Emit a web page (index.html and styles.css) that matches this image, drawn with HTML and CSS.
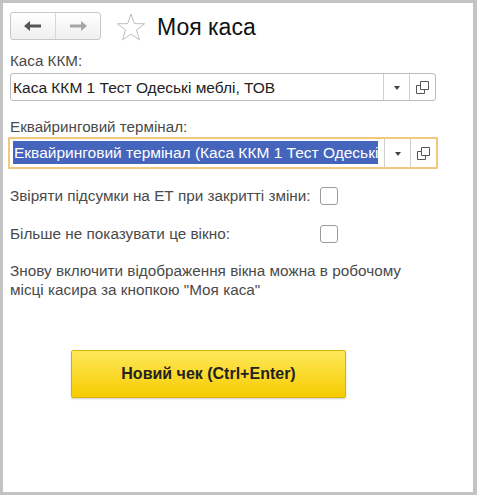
FILE: index.html
```html
<!DOCTYPE html>
<html lang="uk">
<head>
    <meta charset="UTF-8">
    <meta name="viewport" content="width=device-width, initial-scale=1.0">
    <title>Моя каса</title>
    <link rel="stylesheet" href="styles.css">
</head>
<body>

<div class="window">
    <div class="header">
        <div class="nav">
            <button class="nav-btn" title="Назад">
                <svg width="18" height="10" viewBox="0 0 18 10"><path d="M0 5 L6 0 V3.5 H17 V6.5 H6 V10 Z" fill="#555"/></svg>
            </button>
            <button class="nav-btn" title="Вперед">
                <svg width="18" height="10" viewBox="0 0 18 10"><path d="M18 5 L12 0 V3.5 H1 V6.5 H12 V10 Z" fill="#a6a6a6"/></svg>
            </button>
        </div>
        <svg class="star" width="30" height="28" viewBox="0 0 30 28">
            <path d="M15 1 L18.4 10.6 L28.6 10.8 L20.5 17 L23.4 26.8 L15 21 L6.6 26.8 L9.5 17 L1.4 10.8 L11.6 10.6 Z" fill="none" stroke="#bdbdbd" stroke-width="1"/>
        </svg>
        <h1 class="title">Моя каса</h1>
    </div>

    <div class="form">
        <div class="field-label">Каса ККМ:</div>
        <div class="combo">
            <div class="combo-text">Каса ККМ 1 Тест Одеські меблі, ТОВ</div>
            <div class="combo-btn"><span class="drop-arrow"></span></div>
            <div class="combo-btn">
                <svg width="13" height="13" viewBox="0 0 13 13"><path d="M4.5 0.5 H12.5 V8.5 H4.5 Z M4.5 4.5 H0.5 V12.5 H8.5 V8.5" fill="none" stroke="#555" stroke-width="1"/></svg>
            </div>
        </div>

        <div class="field-label second">Еквайринговий термінал:</div>
        <div class="combo focused">
            <div class="combo-text"><span class="selected">Еквайринговий термінал (Каса ККМ 1 Тест Одеські</span></div>
            <div class="combo-btn"><span class="drop-arrow"></span></div>
            <div class="combo-btn">
                <svg width="13" height="13" viewBox="0 0 13 13"><path d="M4.5 0.5 H12.5 V8.5 H4.5 Z M4.5 4.5 H0.5 V12.5 H8.5 V8.5" fill="none" stroke="#555" stroke-width="1"/></svg>
            </div>
        </div>

        <div class="check-row">
            <span class="check-label">Звіряти підсумки на ЕТ при закритті зміни:</span>
            <span class="checkbox"></span>
        </div>
        <div class="check-row">
            <span class="check-label">Більше не показувати це вікно:</span>
            <span class="checkbox"></span>
        </div>

        <p class="hint">Знову включити відображення вікна можна в робочому місці касира за кнопкою "Моя каса"</p>

        <div class="actions">
            <button class="main-btn">Новий чек (Ctrl+Enter)</button>
        </div>
    </div>
</div>

</body>
</html>
```

FILE: styles.css
```css
body {
    margin: 0;
    background-color: #c3c3c3;
    font-family: Arial, "Liberation Sans", sans-serif;
}
.window {
    margin: 3px 4px 0 3px;
    height: 489px;
    background: white;
    padding: 9px 0 0 7px;
    box-sizing: border-box;
}
.header {
    display: flex;
    align-items: center;
    height: 28px;
}
.nav {
    display: flex;
    width: 91px;
    height: 28px;
    border: 1px solid #c8c8c8;
    border-radius: 3px;
    box-sizing: border-box;
    background: linear-gradient(#ffffff, #efefef);
}
.nav-btn {
    flex: 1;
    border: none;
    background: none;
    padding: 0;
    display: flex;
    align-items: center;
    justify-content: center;
}
.nav-btn + .nav-btn {
    border-left: 1px solid #d6d6d6;
}
.star {
    margin-left: 15px;
    margin-top: 2px;
}
.title {
    margin: 2px 0 0 11px;
    font-size: 23px;
    font-weight: normal;
    color: #111;
}
.form {
    padding-top: 12px;
    width: 426px;
}
.field-label {
    font-size: 15.2px;
    color: #4a4a4a;
    height: 21px;
}
.field-label.second {
    margin-top: 17px;
}
.combo {
    display: flex;
    height: 28px;
    border: 1px solid #bcbcbc;
    border-radius: 3px;
    box-sizing: border-box;
    align-items: stretch;
}
.combo.focused {
    margin: -2px 0 0 -2px;
    border: 2px solid #f1c97e;
    width: 430px;
    height: 32px;
    border-radius: 1px;
    padding: 2px 0 2px 3px;
}
.combo-text {
    flex: 1;
    overflow: hidden;
    white-space: nowrap;
    font-size: 15.5px;
    color: #222;
    padding: 5px 0 0 2px;
}
.focused .combo-text {
    padding: 0;
}
.selected {
    display: inline-block;
    background: #4565bd;
    color: white;
    height: 23px;
    line-height: 23px;
    padding-left: 1px;
}
.combo-btn {
    width: 25px;
    border-left: 1px solid #cfcfcf;
    display: flex;
    align-items: center;
    justify-content: center;
}
.focused .combo-btn {
    margin: -2px 0;
}
.drop-arrow {
    width: 0;
    height: 0;
    border-left: 3px solid transparent;
    border-right: 3px solid transparent;
    border-top: 4px solid #444;
    margin-top: 1px;
}
.check-row {
    display: flex;
    align-items: center;
    height: 18px;
    margin-top: 18px;
}
.check-row + .check-row {
    margin-top: 20px;
}
.check-label {
    width: 310px;
    font-size: 15.3px;
    color: #4a4a4a;
}
.checkbox {
    width: 18px;
    height: 18px;
    border: 1px solid #9c9c9c;
    border-radius: 3px;
    box-sizing: border-box;
}
.hint {
    margin: 18px 0 0;
    font-size: 15.3px;
    line-height: 19px;
    color: #4a4a4a;
}
.actions {
    padding: 51px 0 0 61px;
}
.main-btn {
    width: 275px;
    height: 48px;
    border: 1px solid #d9b400;
    border-radius: 2px;
    background: linear-gradient(#ffe85a, #f6cc00);
    box-shadow: 0 1px 2px rgba(0, 0, 0, 0.2);
    font-family: Arial, "Liberation Sans", sans-serif;
    font-size: 16px;
    font-weight: bold;
    color: #222;
    cursor: pointer;
}
```
